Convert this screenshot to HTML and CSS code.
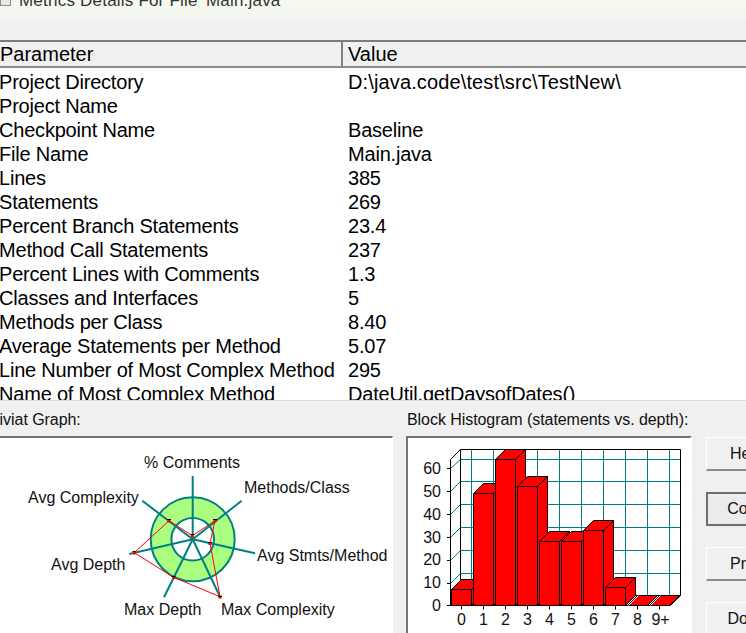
FILE: index.html
```html
<!DOCTYPE html>
<html>
<head>
<meta charset="utf-8">
<title>Metrics Details</title>
<link rel="stylesheet" href="styles.css">
</head>
<body>
<div class="window">
  <div class="titlebar"><span class="title-icon"></span><span class="title-text">Metrics Details For File 'Main.java'</span></div>
  <table class="details head">
    <thead><tr><th>Parameter</th><th>Value</th></tr></thead>
  </table>
  <div class="rows">
    <table class="details">
      <tbody>
        <tr><td>Project Directory</td><td class="path">D:\java.code\test\src\TestNew\</td></tr>
        <tr><td>Project Name</td><td></td></tr>
        <tr><td>Checkpoint Name</td><td>Baseline</td></tr>
        <tr><td>File Name</td><td>Main.java</td></tr>
        <tr><td>Lines</td><td>385</td></tr>
        <tr><td>Statements</td><td>269</td></tr>
        <tr><td>Percent Branch Statements</td><td>23.4</td></tr>
        <tr><td>Method Call Statements</td><td>237</td></tr>
        <tr><td>Percent Lines with Comments</td><td>1.3</td></tr>
        <tr><td>Classes and Interfaces</td><td>5</td></tr>
        <tr><td>Methods per Class</td><td>8.40</td></tr>
        <tr><td>Average Statements per Method</td><td>5.07</td></tr>
        <tr><td>Line Number of Most Complex Method</td><td>295</td></tr>
        <tr><td>Name of Most Complex Method</td><td>DateUtil.getDaysofDates()</td></tr>
      </tbody>
    </table>
  </div>
  <div class="bottom">
    <section class="graph kiviat">
      <div class="graph-label">Kiviat Graph:</div>
      <div class="panel">
        <svg class="chart" width="400" height="195" viewBox="-8 438 400 195">
          <circle class="ring" cx="192.7" cy="539.3" r="42"/>
          <circle class="hole" cx="192.7" cy="539.3" r="21.3"/>
          <path class="spokes" d="M192.7 539.3V476M192.7 539.3L241.7 500.7M192.7 539.3L255 553.3M192.7 539.3L220 596.7M192.7 539.3L164 597.3M192.7 539.3L129.3 554M192.7 539.3L142.3 500.7"/>
          <polygon class="trace" points="192.3,535.7 215,520.7 210,543.3 220,596.7 173.7,577.3 134.3,552.7 169,520.7"/>
          <path class="mark-red" d="M190.8 534.5h3v3h-3zM213.5 519.5h3v3h-3zM208.5 542h3v3h-3zM218.5 595.5h3v3h-3zM172.2 576h3v3h-3zM132.8 551.5h3v3h-3zM167.5 519.5h3v3h-3z"/>
          <path class="mark-black" d="M190.5 534.5h4M213 519.5h4M208 542.5h4M218 596.5h4M171.5 576.5h4M132.5 551.5h3M167 519.5h4"/>
          <text x="144" y="468">% Comments</text>
          <text x="244" y="493">Methods/Class</text>
          <text x="28" y="503">Avg Complexity</text>
          <text x="257" y="561">Avg Stmts/Method</text>
          <text x="51" y="570">Avg Depth</text>
          <text x="124" y="615">Max Depth</text>
          <text x="221" y="615">Max Complexity</text>
        </svg>
      </div>
    </section>
    <section class="graph histogram">
      <div class="graph-label">Block Histogram (statements vs. depth):</div>
      <div class="panel">
        <svg class="chart" width="282" height="195" viewBox="408 438 282 195">
          <path class="grid" d="M460.5 459.5H680.5M460.5 481.5H680.5M460.5 504.5H680.5M460.5 527.5H680.5M460.5 550.5H680.5M460.5 573.5H680.5M471.5 449.5V595.5M493.5 449.5V595.5M515.5 449.5V595.5M537.5 449.5V595.5M559.5 449.5V595.5M581.5 449.5V595.5M603.5 449.5V595.5M625.5 449.5V595.5M647.5 449.5V595.5M669.5 449.5V595.5"/>
          <path class="grid" d="M450.5 468.5L460.5 459.5M450.5 491.5L460.5 481.5M450.5 514.5L460.5 504.5M450.5 537.5L460.5 527.5M450.5 560.5L460.5 550.5M450.5 583.5L460.5 573.5"/>
          <path class="axes" d="M450.5 605.5V459.5L460.5 449.5V595.5L450.5 605.5M460.5 449.5H680.5V595.5H460.5M450.5 605.5H670.5L680.5 595.5"/>
          <path class="axes" d="M447 468.5h4M447 491.5h4M447 514.5h4M447 537.5h4M447 560.5h4M447 583.5h4M447 605.5h4M461.5 605.5v4M483.5 605.5v4M505.5 605.5v4M527.5 605.5v4M549.5 605.5v4M571.5 605.5v4M593.5 605.5v4M615.5 605.5v4M637.5 605.5v4M659.5 605.5v4"/>
          <path class="bar" d="M451.5 589.5h20V605.5h-20zM451.5 589.5l10 -10h20l-10 10zM471.5 589.5l10 -10V595.5l-10 10z"/>
          <path class="bar" d="M473.5 493.5h20V605.5h-20zM473.5 493.5l10 -10h20l-10 10zM493.5 493.5l10 -10V595.5l-10 10z"/>
          <path class="bar" d="M495.5 459.5h20V605.5h-20zM495.5 459.5l10 -10h20l-10 10zM515.5 459.5l10 -10V595.5l-10 10z"/>
          <path class="bar" d="M517.5 486.5h20V605.5h-20zM517.5 486.5l10 -10h20l-10 10zM537.5 486.5l10 -10V595.5l-10 10z"/>
          <path class="bar" d="M539.5 541.5h20V605.5h-20zM539.5 541.5l10 -10h20l-10 10zM559.5 541.5l10 -10V595.5l-10 10z"/>
          <path class="bar" d="M561.5 541.5h20V605.5h-20zM561.5 541.5l10 -10h20l-10 10zM581.5 541.5l10 -10V595.5l-10 10z"/>
          <path class="bar" d="M583.5 530.5h20V605.5h-20zM583.5 530.5l10 -10h20l-10 10zM603.5 530.5l10 -10V595.5l-10 10z"/>
          <path class="bar" d="M605.5 587.5h20V605.5h-20zM605.5 587.5l10 -10h20l-10 10zM625.5 587.5l10 -10V595.5l-10 10z"/>
          <path class="bar" d="M627.5 605.5l10 -10h20l-10 10z"/>
          <path class="bar" d="M649.5 605.5l10 -10h20l-10 10z"/>
          <path class="edge" d="M628.5 605.5l10 -10M650.5 605.5l10 -10"/>
          <text class="num" x="441" y="474">60</text>
          <text class="num" x="441" y="497">50</text>
          <text class="num" x="441" y="520">40</text>
          <text class="num" x="441" y="543">30</text>
          <text class="num" x="441" y="565">20</text>
          <text class="num" x="441" y="588">10</text>
          <text class="num" x="441" y="611">0</text>
          <text class="cat" x="461.5" y="625">0</text>
          <text class="cat" x="483.5" y="625">1</text>
          <text class="cat" x="505.5" y="625">2</text>
          <text class="cat" x="527.5" y="625">3</text>
          <text class="cat" x="549.5" y="625">4</text>
          <text class="cat" x="571.5" y="625">5</text>
          <text class="cat" x="593.5" y="625">6</text>
          <text class="cat" x="615.5" y="625">7</text>
          <text class="cat" x="637.5" y="625">8</text>
          <text class="cat" x="660.5" y="625">9+</text>
        </svg>
      </div>
    </section>
    <div class="buttons">
      <button class="btn">Help</button>
      <button class="btn default">Copy</button>
      <button class="btn">Print</button>
      <button class="btn">Done</button>
    </div>
  </div>
</div>
</body>
</html>
```

FILE: styles.css
```css
html, body {
  margin: 0;
  padding: 0;
  width: 746px;
  height: 633px;
  overflow: hidden;
  background: #f0f0f0;
}

.window {
  width: 746px;
  height: 633px;
  overflow: hidden;
  font-family: "Liberation Sans", Arial, sans-serif;
  color: #000;
}

.titlebar {
  height: 22px;
  margin-bottom: 18px;
  display: flex;
  align-items: flex-start;
  gap: 8px;
  overflow: hidden;
  background: linear-gradient(#f5f9ef, #f3f6ee 85%, #f0f0f0);
  font-size: 17px;
  line-height: 17px;
  color: #333;
}

.title-icon {
  width: 9px;
  height: 5px;
  background: #e8e8e8;
  border: 1px solid #8a8a8a;
  border-top: 0;
  flex: none;
}

.title-text {
  margin-top: -8px;
  letter-spacing: 0.2px;
  white-space: nowrap;
}

.details {
  width: 746px;
  table-layout: fixed;
  border-collapse: collapse;
  font-size: 20px;
  letter-spacing: -0.2px;
}

.details th {
  height: 24px;
  padding: 0;
  text-align: left;
  font-weight: normal;
  line-height: 24px;
  letter-spacing: 0;
  background: #f0f0f0;
  border-top: 2px solid #7c7c7c;
  border-bottom: 2px solid #8c8c8c;
}

.details td:first-child {
  width: 348px;
  text-indent: -1px;
}

.details th:first-child {
  width: 341px;
  border-right: 2px solid #808080;
}

.details th:last-child {
  padding-left: 5px;
}

.details td {
  height: 24px;
  padding: 0;
  line-height: 24px;
  white-space: nowrap;
}

.details .path {
  letter-spacing: 0.13px;
}

.rows {
  height: 330px;
  padding-top: 2px;
  overflow: hidden;
  background: #fff;
  border-bottom: 1px solid #dcdcdc;
}

.bottom {
  display: flex;
  align-items: flex-start;
  margin-left: -10px;
  font-size: 16px;
}

.graph-label {
  height: 35px;
  line-height: 37px;
  letter-spacing: -0.06px;
  white-space: nowrap;
  color: #111;
}

.kiviat .graph-label {
  margin-left: -1px;
}

.histogram .graph-label {
  padding-left: 1px;
}

.kiviat {
  width: 403px;
  margin-right: 13px;
  flex: none;
}

.histogram {
  width: 286px;
  margin-right: 14px;
  flex: none;
}

.panel {
  background: #fff;
  border-top: 2px solid #757575;
  border-left: 2px solid #757575;
  border-right: 2px solid #fff;
  height: 195px;
}

.kiviat .panel {
  border-right-width: 1px;
}

.chart {
  display: block;
}

.chart text {
  font-family: "Liberation Sans", Arial, sans-serif;
  font-size: 16px;
  fill: #111;
}

.chart .num {
  text-anchor: end;
}

.chart .cat {
  text-anchor: middle;
}

.ring {
  fill: #aaff80;
  stroke: #008080;
  stroke-width: 2;
}

.hole {
  fill: #fff;
  stroke: #008080;
  stroke-width: 2;
}

.spokes {
  fill: none;
  stroke: #008080;
  stroke-width: 2;
}

.trace {
  fill: none;
  stroke: #ff0000;
  stroke-width: 1;
}

.mark-red {
  fill: #ff0000;
}

.mark-black {
  fill: none;
  stroke: #000;
  stroke-width: 1;
}

.grid {
  fill: none;
  stroke: #008080;
  stroke-width: 1;
}

.axes {
  fill: none;
  stroke: #000;
  stroke-width: 1;
}

.bar {
  fill: #ff0000;
  stroke: #000;
  stroke-width: 1;
}

.edge {
  fill: none;
  stroke: #fff;
  stroke-width: 1;
}

.buttons {
  display: flex;
  flex-direction: column;
  gap: 21px;
  padding-top: 36px;
  flex: none;
}

.btn {
  width: 80px;
  height: 34px;
  padding: 0;
  box-sizing: border-box;
  font-family: "Liberation Sans", Arial, sans-serif;
  font-size: 16px;
  color: #111;
  background: #f0f0f0;
  border: 0;
  border-top: 1px solid #fff;
  border-left: 1px solid #fff;
  border-bottom: 2px solid #8a8a8a;
}

.btn.default {
  border: 2px solid #6e6e6e;
  background: #ececec;
}
```
